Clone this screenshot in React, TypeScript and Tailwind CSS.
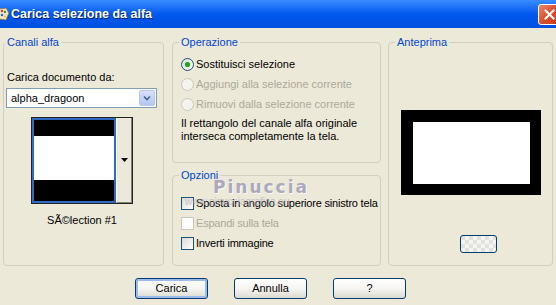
import React from "react";

const font = "font-['Tahoma','Liberation_Sans',sans-serif]";

function Radio({ label, checked, disabled }: { label: string; checked?: boolean; disabled?: boolean }) {
  return (
    <div className="flex h-[20px] items-center">
      <span
        className={
          "flex h-[13px] w-[13px] items-center justify-center rounded-full border " +
          (disabled
            ? "border-[#CAC8BB] bg-[#F4F3EE]"
            : "border-[#1C5180] bg-gradient-to-br from-[#DCDBD3] to-white")
        }
      >
        {checked && <span className="h-[5px] w-[5px] rounded-full bg-[#21A121] shadow-[0_0_1px_#62D162]" />}
      </span>
      <span className={"ml-[2px] whitespace-nowrap " + (disabled ? "text-[#ACA899]" : "text-black")}>{label}</span>
    </div>
  );
}

function Check({ label, disabled }: { label: string; disabled?: boolean }) {
  return (
    <div className="flex h-[20px] items-center">
      <span
        className={
          "h-[13px] w-[13px] shrink-0 border " +
          (disabled ? "border-[#CAC8BB] bg-white" : "border-[#1C5180] bg-gradient-to-br from-[#DCDBD3] to-white")
        }
      />
      <span className={"ml-[2px] whitespace-nowrap tracking-[-0.2px] " + (disabled ? "text-[#ACA899]" : "text-black")}>
        {label}
      </span>
    </div>
  );
}

function XpButton({ label, focused }: { label: string; focused?: boolean }) {
  return (
    <button
      className={
        "h-[21px] w-[73px] rounded-[3px] border border-[#003C74] bg-gradient-to-b from-white via-[#F6F5F1] to-[#DCDAD1] text-[11px] text-black " +
        (focused ? "shadow-[inset_0_0_0_2px_#9DBBEB]" : "")
      }
    >
      {label}
    </button>
  );
}

function Group({
  title,
  className,
  legendClass,
  children,
}: {
  title: string;
  className: string;
  legendClass?: string;
  children: React.ReactNode;
}) {
  return (
    <fieldset className={"relative rounded-[4px] border border-[#D0D0BF] p-0 " + className}>
      <legend className={"px-[2px] leading-[13px] text-[#0046D5] " + (legendClass ?? "ml-[6px]")}>{title}</legend>
      {children}
    </fieldset>
  );
}

export default function App() {
  return (
    <div className={"h-[305px] w-[556px] overflow-hidden bg-[#ECE9D8] text-[11px] leading-[13px] " + font}>
      {/* title bar */}
      <div className="flex h-[28px] items-center bg-gradient-to-b from-[#3A8CFF] via-[#0058EE] to-[#0050DF]">
        <svg width="11" height="16" viewBox="0 0 11 16" className="ml-[-1px]">
          <path d="M0 3 L7 2 L10 7 L7 14 L0 13 Z" fill="#F3E7C9" stroke="#8A6A3A" strokeWidth="0.8" />
          <circle cx="3" cy="5" r="1.3" fill="#E23B2B" />
          <circle cx="6" cy="6" r="1.2" fill="#2E9C3A" />
          <circle cx="3" cy="9" r="1.2" fill="#2B5FD8" />
          <circle cx="6" cy="10.5" r="1.1" fill="#F2C21B" />
        </svg>
        <span className="ml-[1px] font-['Liberation_Sans',sans-serif] text-[12.5px] font-bold text-white [text-shadow:1px_1px_0_#0A246A]">
          Carica selezione da alfa
        </span>
        <span className="ml-auto mr-[-4px] flex h-[21px] w-[22px] items-center justify-center rounded-[3px] border border-white bg-gradient-to-br from-[#E8866A] via-[#D9512C] to-[#C43A16]">
          <svg width="11" height="11" viewBox="0 0 11 11">
            <path d="M1.5 1.5 L9.5 9.5 M9.5 1.5 L1.5 9.5" stroke="white" strokeWidth="2" strokeLinecap="square" />
          </svg>
        </span>
      </div>

      {/* groups */}
      <div className="flex pl-[3px] pt-[8px]">
        <Group title="Canali alfa" className="h-[230px] w-[161px]" legendClass="ml-[1px]">
          <div className="flex flex-col pl-[3px]">
            <div className="mt-[22px]">Carica documento da:</div>
            <div className="ml-[-1px] mt-[4px] flex h-[20px] w-[151px] items-center border border-[#7F9DB9] bg-white">
              <span className="ml-[4px] flex-1">alpha_dragoon</span>
              <span className="mr-[1px] flex h-[16px] w-[16px] items-center justify-center rounded-[2px] border border-[#B6C8F1] bg-gradient-to-b from-[#D6E1FB] to-[#B2C6F5]">
                <svg width="8" height="6" viewBox="0 0 8 6">
                  <path d="M1 1.5 L4 4.5 L7 1.5" fill="none" stroke="#4D6185" strokeWidth="1.6" />
                </svg>
              </span>
            </div>
            <div className="ml-[24px] mt-[9px] flex h-[87px] w-[102px] border border-[#222] bg-white">
              <div className="flex w-[84px] flex-col border-2 border-[#316AC5] p-0">
                <div className="h-[16px] bg-black" />
                <div className="h-[44px] bg-white" />
                <div className="flex-1 bg-black" />
              </div>
              <div className="flex flex-1 items-center justify-center border-b border-r border-[#808080] border-l border-l-white bg-[#ECE9D8]">
                <svg width="7" height="4" viewBox="0 0 7 4">
                  <path d="M0 0 H7 L3.5 4 Z" fill="black" />
                </svg>
              </div>
            </div>
            <div className="ml-[24px] mt-[10px] w-[102px] text-center">SÃ©lection #1</div>
          </div>
        </Group>

        <div className="ml-[8px] flex w-[209px] flex-col">
          <Group title="Operazione" className="h-[127px] w-[209px]">
            <div className="pl-[8px] pt-[5px]">
              <Radio label="Sostituisci selezione" checked />
              <Radio label="Aggiungi alla selezione corrente" disabled />
              <Radio label="Rimuovi dalla selezione corrente" disabled />
              <p className="mt-[3px]">
                Il rettangolo del canale alfa originale
                <br />
                interseca completamente la tela.
              </p>
            </div>
          </Group>
          <Group title="Opzioni" className="mt-[6px] h-[97px] w-[209px]">
            <div className="pl-[8px] pt-[11px]">
              <Check label="Sposta in angolo superiore sinistro tela" />
              <Check label="Espandi sulla tela" disabled />
              <Check label="Inverti immagine" />
            </div>
            <div className="pointer-events-none absolute left-[40px] top-[-4px] flex flex-col items-start">
              <span className="font-['DejaVu_Sans',sans-serif] text-[17px] font-bold leading-[18px] tracking-[2px] text-[#9C9AB4] opacity-80 [text-shadow:1px_1px_0_#fff]">
                Pinuccia
              </span>
              <span className="ml-[-28px] mt-[1px] text-[10px] leading-[10px] text-[#A9A8B8] opacity-60">
                www.pinucciagrafica.eu
              </span>
            </div>
          </Group>
        </div>

        <Group title="Anteprima" className="ml-[7px] h-[230px] w-[165px]">
          <div className="flex flex-col">
            <div className="ml-[12px] mt-[61px] flex h-[85px] w-[140px] bg-black pb-[11px] pl-[12px] pr-[11px] pt-[12px]">
              <div className="flex-1 bg-white" />
            </div>
            <div className="ml-[71px] mt-[40px] h-[18px] w-[37px] rounded-[3px] border border-[#003C74] bg-[conic-gradient(#f4f4f2_25%,#e2e2dc_0_50%,#f4f4f2_0_75%,#e2e2dc_0)] bg-[length:8px_8px]" />
          </div>
        </Group>
      </div>

      {/* buttons */}
      <div className="mt-[12px] flex gap-[26px] pl-[135px]">
        <XpButton label="Carica" focused />
        <XpButton label="Annulla" />
        <XpButton label="?" />
      </div>
    </div>
  );
}
